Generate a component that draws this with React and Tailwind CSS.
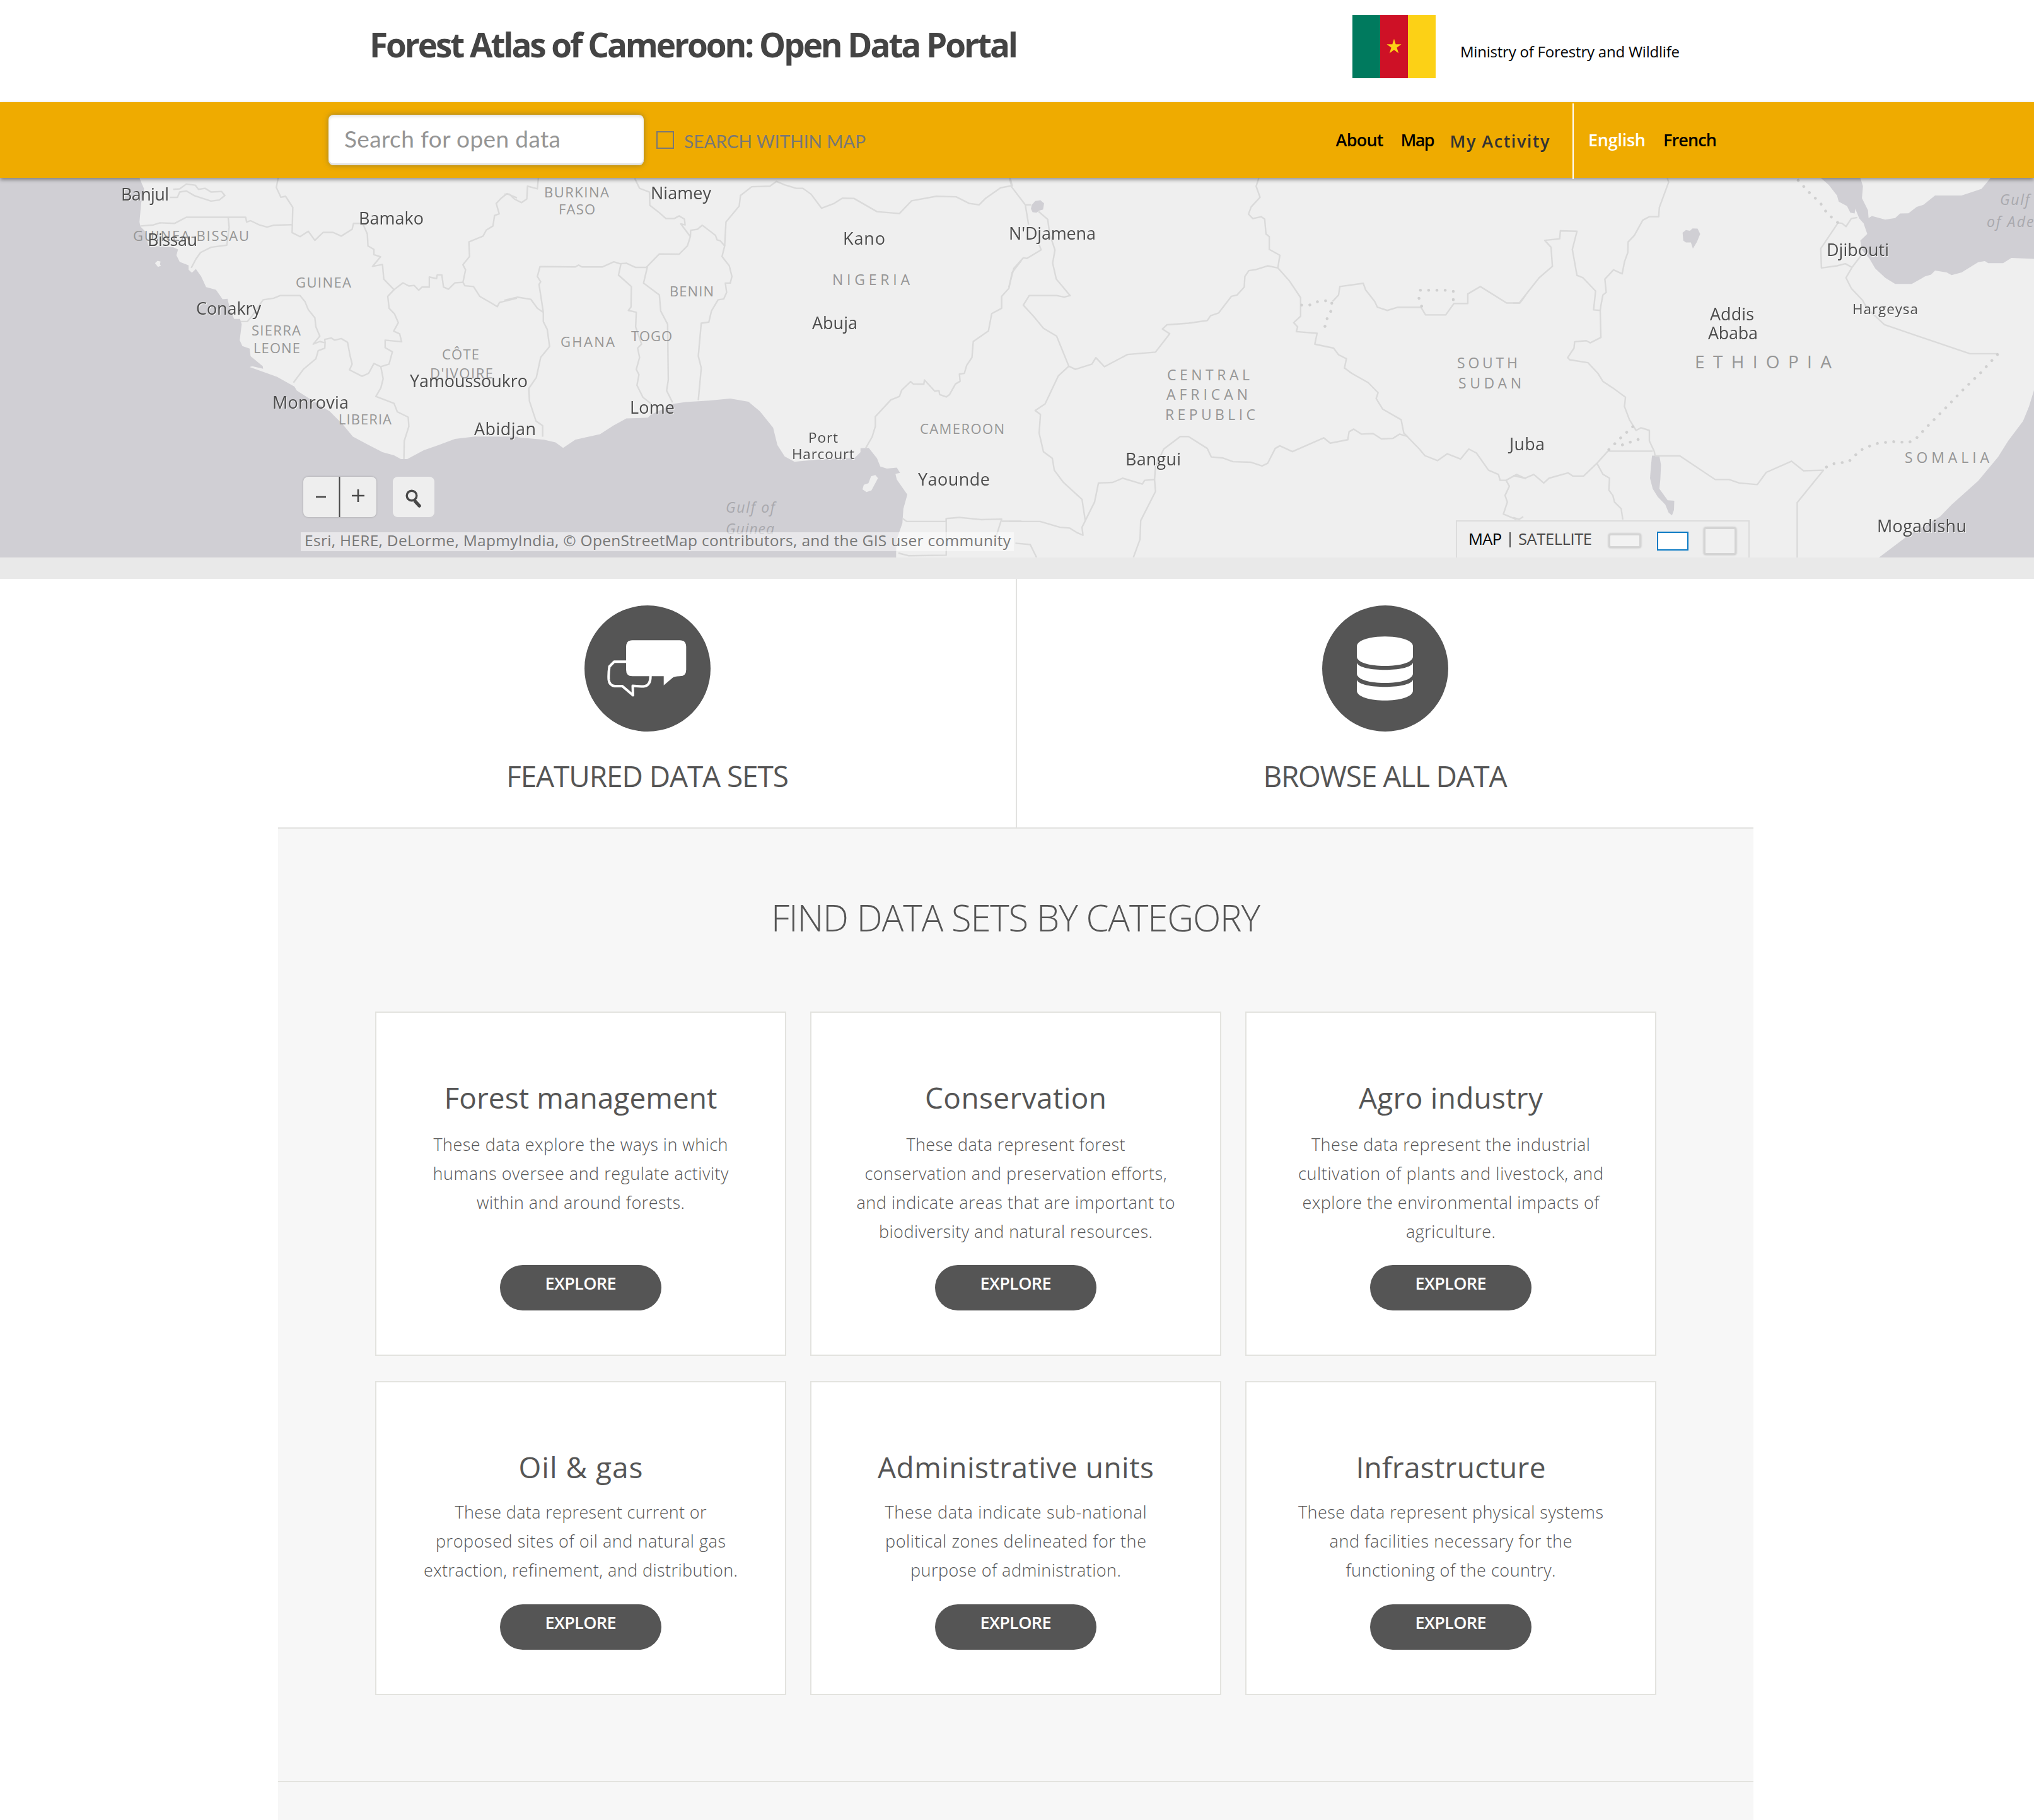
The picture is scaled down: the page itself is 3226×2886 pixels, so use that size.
import React, { useLayoutEffect, useRef, useState } from "react";

const FONT = "font-['Open_Sans','Noto_Sans',sans-serif]";

/* One line of text whose tracking is adjusted so that it fills `width` pixels. */
function Fit({ width, className = "", children }) {
  const ref = useRef(null);
  const [spacing, setSpacing] = useState(0);
  useLayoutEffect(() => {
    const natural = ref.current.getBoundingClientRect().width;
    setSpacing((width - natural) / Math.max(1, children.length - 1));
  }, [width, children]);
  return (
    <span
      ref={ref}
      className={"inline-block whitespace-nowrap " + className}
      style={{ letterSpacing: spacing + "px", marginRight: -spacing + "px" }}
    >
      {children}
    </span>
  );
}

function Flag() {
  return (
    <svg className="mt-6 h-[100px] w-[132px] shrink-0" viewBox="0 0 132 100">
      <rect width="44" height="100" fill="#007a5e" />
      <rect x="44" width="44" height="100" fill="#ce1126" />
      <rect x="88" width="44" height="100" fill="#fcd116" />
      <path
        d="M66 37.5l2.7 8.7h8.9l-7.2 5.4 2.8 8.8-7.2-5.4-7.2 5.4 2.8-8.8-7.2-5.4h8.9z"
        fill="#fcd116"
      />
    </svg>
  );
}

function Header() {
  return (
    <header className="flex h-[162px] items-start bg-white pl-[586px]">
      <h1 className="mt-[41px] w-[1559px] text-[53px] leading-[60px] font-bold text-[#444]">
        <Fit width={1029}>Forest Atlas of Cameroon: Open Data Portal</Fit>
      </h1>
      <Flag />
      <p className="ml-[39px] text-[24px] leading-[163px] text-black">
        <Fit width={348}>Ministry of Forestry and Wildlife</Fit>
      </p>
    </header>
  );
}

function NavBar() {
  return (
    <nav className="relative z-10 flex h-[120px] items-center bg-[#efab00] pr-[503px] pl-[521px] text-[27px] font-semibold text-black shadow-[0_3px_6px_rgba(0,0,0,0.4)]">
      <div className="flex h-20 w-[500px] items-center rounded-lg bg-white pb-1 pl-[25px] font-['Lato',sans-serif] text-[37px] font-normal text-[#959595] shadow-[0_0_8px_rgba(120,110,60,0.7),inset_0_3px_4px_rgba(0,0,0,0.1),inset_0_-3px_0_#e2e2e2]">
        <Fit width={343}>Search for open data</Fit>
      </div>
      <span className="ml-5 size-7 border-2 border-[#777]" />
      <span className="ml-4 pt-1 font-['Lato',sans-serif] text-[28px] font-normal text-[#777]">
        <Fit width={288}>SEARCH WITHIN MAP</Fit>
      </span>
      <div className="ml-auto flex items-center">
        <Fit width={76}>About</Fit>
      </div>
      <div className="ml-[27px] flex items-center">
        <Fit width={54}>Map</Fit>
      </div>
      <div className="ml-6 flex items-center pt-1 text-[#333]">
        <Fit width={158}>My Activity</Fit>
      </div>
      <span className="mt-1 ml-9 h-[120px] w-[2.5px] bg-white" />
      <div className="ml-[23px] flex items-center text-white">
        <Fit width={91}>English</Fit>
      </div>
      <div className="ml-7 flex items-center">
        <Fit width={85}>French</Fit>
      </div>
    </nav>
  );
}

/* Place names: [text, left, baseline, width] */
const CITIES = [
  ["Banjul", 192, 318, 76],
  ["Bissau", 234, 390, 79],
  ["Bamako", 569, 356, 103],
  ["Conakry", 311, 499, 103],
  ["Yamoussoukro", 650, 614, 187],
  ["Monrovia", 432, 648, 121],
  ["Abidjan", 752, 690, 98],
  ["Niamey", 1032, 316, 96],
  ["Lome", 999, 656, 71],
  ["Kano", 1337, 388, 67],
  ["Abuja", 1288, 522, 72],
  ["Yaounde", 1456, 770, 114],
  ["N'Djamena", 1600, 380, 138],
  ["Bangui", 1785, 738, 88],
  ["Juba", 2394, 714, 56],
  ["Addis", 2712, 508, 70],
  ["Ababa", 2709, 538, 79],
  ["Djibouti", 2897, 406, 99],
  ["Mogadishu", 2977, 844, 142],
];
const TOWNS = [
  ["Port", 1282, 702, 47],
  ["Harcourt", 1256, 728, 99],
  ["Hargeysa", 2938, 498, 104],
];
const COUNTRIES = [
  ["GUINEA-BISSAU", 211, 382, 184],
  ["GUINEA", 469, 456, 88],
  ["SIERRA", 399, 532, 78],
  ["LEONE", 402, 560, 74],
  ["CÔTE", 701, 570, 59],
  ["D'IVOIRE", 682, 600, 100],
  ["LIBERIA", 537, 673, 84],
  ["BURKINA", 863, 313, 103],
  ["FASO", 886, 340, 58],
  ["BENIN", 1062, 470, 70],
  ["GHANA", 889, 550, 86],
  ["TOGO", 1001, 541, 65],
  ["CAMEROON", 1459, 688, 134],
];
const WIDE_COUNTRIES = [
  ["NIGERIA", 1320, 452, 123],
  ["CENTRAL", 1851, 603, 131],
  ["AFRICAN", 1850, 634, 129],
  ["REPUBLIC", 1848, 666, 143],
  ["SOUTH", 2311, 584, 96],
  ["SUDAN", 2313, 616, 100],
  ["SOMALIA", 3021, 734, 134],
];
const SEAS = [
  ["Gulf of", 1151, 813, 78],
  ["Guinea", 1151, 847, 77],
  ["Gulf", 3172, 325, 47],
  ["of Aden", 3151, 360, 90],
];

function Labels({ items, ...rest }) {
  return (
    <g {...rest}>
      {items.map(([text, x, y, width]) => (
        <text key={text} x={x} y={y} textLength={width} lengthAdjust="spacing">
          {text}
        </text>
      ))}
    </g>
  );
}

/* The base map is drawn as four tiles, each in its own tile units. */
const TILES = [
  {
    transform: "translate(0 270) scale(0.52296 0.42092)",
    water: [
      "M0 0H425L424 32 437 70 428 125 423 195 426 212 440 230 450 284 525 290 540 298 535 320 545 345 572 358 572 375 582 386 594 372 610 400 625 440 655 450 675 486 690 484 697 520 710 560 728 560 733 580 727 640 735 662 757 672 760 700 797 738 798 748 765 738 757 741 800 760 840 778 893 815 900 830 940 862 1000 908 1040 958 1070 1003 1110 1030 1160 1062 1195 1074 1216 1088 1235 1088 1285 1055 1330 1035 1380 1012 1440 1003 1570 1004V1600H0Z",
    ],
    land: ["M470 350l8-9 9 3-2 10 3 6-9 4z"],
    borders: [
      "M848 0L838 65 852 102 866 98 888 140 886 235 910 250 935 230 955 264 980 234 1010 234 1035 248 1068 222 1072 200 1100 200 1114 240 1116 285 1134 298 1134 318 1154 326 1130 362 1160 355 1164 410 1195 450 1176 475 1180 520 1196 540 1208 574 1194 606 1212 616 1218 646 1168 640 1168 668 1190 684 1180 730 1155 740 1162 785 1155 820 1140 852 1195 878 1205 910 1238 930 1240 965 1226 1020 1225 1088",
      "M515 102L538 102 545 82 565 78 590 96 640 116 665 112 682 95 672 80 640 82 622 68 602 72 592 56 565 52 545 70 525 72",
      "M426 210L465 206 485 198 530 200 565 177H745L748 195 760 190 785 205 810 214 830 207 888 205",
      "M692 177L695 215 688 282 640 290 608 310 594 335 580 368",
      "M730 570L750 570 765 548 798 488 830 482 850 472 910 472 925 495 935 525 955 556 958 590 970 625 950 655 970 645 986 650 985 670 965 680 958 710 920 750 890 800",
      "M986 650L985 637 1005 632 1015 640 1035 634 1054 648 1062 700 1068 730 1060 752 1098 776 1118 765 1134 728 1155 740",
      "M1195 450L1222 424 1240 436 1256 434 1270 452 1280 440 1302 440 1302 402 1324 408 1326 394 1340 394 1345 440 1360 448 1380 424 1404 422 1410 435 1436 438 1455 475 1490 500 1508 514 1515 498 1568 482",
      "M1404 422L1412 375 1404 356 1424 325 1422 270 1465 248 1475 225 1495 210 1500 170 1514 164 1505 125 1520 105 1538 88 1568 104",
    ],
  },
  {
    transform: "translate(800 270) scale(0.52296 0.42092)",
    water: [
      "M-4 1004L40 1006 120 1015 155 1025 178 1046 215 1015 240 1008 290 994 330 962 370 935 435 932 445 920 480 900 510 880 550 873 620 868 685 860 740 872 775 908 815 970 828 1035 850 1078 880 1098 950 1090 1062 1084 1080 1062 1080 1047 1105 1046 1130 1085 1140 1116 1160 1124 1190 1120 1200 1140 1186 1144 1190 1165 1222 1222 1210 1275 1207 1330 1190 1390 1188 1440 1188 1460H-4Z",
    ],
    land: ["M1112 1153l13-5 8 12-20 46-15 6-12-10 4-17 14-6z"],
    borders: [
      "M0 90L15 90 30 108 52 122 68 108 70 60 100 70 103 30",
      "M0 490L40 478 80 486 100 520 118 535 118 570 130 600 137 664 110 705 97 780 74 822 76 870 96 945 116 962 116 1004",
      "M118 535L105 430 110 420 100 400 108 363 215 364 225 357 235 364H298L332 345 350 352 370 350 398 366H430L470 315 530 316 555 285 564 250 535 202 548 206 546 184 530 172 515 182H490L470 160 441 132 440 82 410 68 395 30",
      "M354 350L346 395 358 408 385 438 384 515 376 528 400 535 398 590 416 655 404 670 410 705 400 750 408 770 402 810 420 855 445 880",
      "M434 362L422 425 470 470 474 530 495 580 497 790 492 830 510 875",
      "M564 250L565 226 586 222 600 207 640 245 645 262 655 266 668 285 660 325 682 360 690 400 685 425 670 425 674 460 665 485 648 488 628 530 620 572 597 576 588 700 597 745 588 866",
      "M668 285L672 195 712 135 716 95 750 62 805 60 825 42 850 55 885 68 905 68 930 90 962 143 1000 125 1025 105 1060 106 1130 156 1198 163 1235 115 1310 98 1370 100 1410 125 1440 130 1460 105 1505 66 1540 58 1534 30",
      "M1568 340L1540 385 1530 445 1508 475 1508 520 1478 540 1468 605 1422 645 1418 705 1402 735 1395 765 1380 768 1382 795 1368 805 1350 845 1340 854 1320 845 1318 830 1305 832 1274 790 1272 806 1240 805 1232 796 1205 828 1198 852 1172 865 1125 928 1125 965 1115 1005 1096 1046",
      "M1208 1312L1220 1323H1340V1312L1380 1308 1445 1316 1508 1314 1490 1385",
      "M1508 1322H1568M1340 1312V1450L1225 1452 1195 1442",
    ],
  },
  {
    transform: "translate(1600 270) scale(0.52296 0.42092)",
    water: ["M70 130L80 116 96 113 107 125 104 148 92 152 84 160 72 158 67 145Z"],
    land: [],
    borders: [
      "M2 30L10 65 50 130 68 130M50 130L60 205M90 155L118 185 124 240 140 300 133 350 144 410 186 472 168 478 145 472 62 472 44 508 75 550 105 595 145 625 182 738 202 750 252 730 264 706 290 740 360 694 445 685 488 616 466 598 480 582 545 576 602 566 612 548 636 538 675 475 692 470 714 440 716 400 728 378 750 374 785 360 816 368 822 320 790 298 790 250 780 240 776 184 766 175 740 182 727 165 735 138 762 102 750 60 758 30",
      "M92 280L98 300 55 332 44 330 15 370 0 440",
      "M182 738L150 775 110 880 80 905 96 920 92 990 105 1060 132 1085 138 1130 165 1175 222 1240 232 1320 222 1345 225 1375 208 1366 185 1348 155 1345 95 1323H0",
      "M232 1320L260 1250 272 1178 315 1176 345 1160 405 1182 412 1168 442 1165 445 1210 400 1320 398 1390 378 1458",
      "M442 1165L445 1115 470 1050 520 1003 545 1003 602 1048 614 1080 650 1084 680 1098 735 1100 768 1114 785 1104 808 1048 822 1038 860 1060 955 1008 975 1028 1028 1015 1032 985 1046 975 1070 994 1105 992 1130 1012 1165 1010 1185 994 1210 1003",
      "M816 368L850 415 885 480 885 550 864 574 876 590 872 608 935 614 928 655 985 670 1000 695 1024 710 1018 745 1040 765 1090 800 1120 838 1114 860 1134 900 1190 940 1198 990 1245 1050 1262 1075 1300 1094 1330 1068 1370 1088 1395 1050 1418 1065 1455 1130 1485 1146 1490 1168 1508 1168 1518 1190 1505 1225 1512 1250 1500 1295 1540 1316M1508 1168L1540 1146 1568 1162",
      "M982 494L1000 470 1004 438 1075 426 1082 450 1110 495 1118 516 1148 528 1180 516H1250L1264 545H1325L1350 502H1392L1392 466 1430 438 1510 500 1550 500 1568 470",
      "M20 1405L65 1410 84 1458",
    ],
    dots: "M888 508L912 508 932 496 956 491 980 494 978 528 966 552 963 582 946 606M1252 512L1244 482 1248 452H1325L1348 456V490",
  },
  {
    transform: "translate(2400 270) scale(0.52679 0.42092)",
    water: [
      "M918 20L950 55 975 95 980 118 1005 135 1015 160 1028 163 1030 145 1042 182 1055 200 1066 240 1045 265 1050 300 1072 332 1090 370 1120 405 1150 428 1200 428 1240 400 1258 393 1270 378 1305 385 1320 395 1350 385 1400 346 1420 342 1430 350 1475 350 1500 330 1568 334V20H1443L1410 70 1350 95 1270 95 1235 130 1215 138 1190 162 1165 163 1150 180 1120 186 1080 172 1070 180 1068 150 1050 105 1053 60 1043 20Z",
      "M1570 820L1553 890 1535 945 1490 1020 1460 1080 1400 1170 1320 1260 1285 1305 1190 1375 1100 1460H1570Z",
      "M418 1075H440L445 1110 443 1165 440 1200 465 1243 485 1245 484 1280 478 1300 468 1290 458 1260 435 1230 420 1200 412 1160 415 1110Z",
      "M510 235L520 225 532 228 540 219 555 220 563 240 553 270 541 295 535 272 520 272 512 265Z",
    ],
    land: [],
    borders: [
      "M0 500H18L78 405 118 362 114 290 95 264 140 258 142 228 192 230 178 298 192 396 210 405 248 455 242 526 262 528 264 510 270 470 280 460 276 410 302 375 328 390 335 345 345 310 346 270 365 245 390 188 410 175 438 175 440 140 468 45 464 30",
      "M262 528L264 630 232 650 220 642 185 646 183 670 164 706 170 714 225 725 255 765 270 795 300 820 338 855 335 890 350 940 370 980 385 970 410 980 410 1020 425 1060 427 1076",
      "M427 1076H502L608 1165H650L680 1178 735 1184 762 1138 838 1096 874 1132 934 1130 855 1252V1460",
      "M0 1150L35 1160 62 1146 92 1178 108 1160 165 1140 180 1152 212 1152 252 1104 285 1058H420M252 1104L270 1145 290 1160 288 1205 300 1225 305 1250 325 1275 330 1316",
      "M978 198L926 295 928 368 975 360 1000 352 1020 366 1048 320M1020 366L1002 405 1018 445 1052 490 1065 520 1118 582 1375 691H1458M978 198L990 200 1002 212 1018 182 1036 178",
      "M0 1308L18 1315 30 1305",
    ],
    dots: "M858 38L890 82 925 124 945 162 978 198M1458 694L1408 762 1352 830 1300 898 1246 966 1212 1012 1190 1026 1140 1022 1090 1030 1045 1055 1010 1098 962 1106 934 1124M360 966L322 1010 286 1055M376 1014L334 1032 308 1044M376 1014L386 1040",
  },
];

function BaseMap() {
  return (
    <svg className="block h-[602px] w-full" viewBox="0 282 3226 602" preserveAspectRatio="none">
      <rect y="282" width="3226" height="602" fill="#efefef" />
      {TILES.map((tile) => (
        <g key={tile.transform} transform={tile.transform} fill="none" strokeLinejoin="round">
          {tile.water.map((d) => (
            <path key={d} d={d} fill="#d0cfd4" />
          ))}
          {tile.land.map((d) => (
            <path key={d} d={d} fill="#efefef" />
          ))}
          {tile.borders.map((d) => (
            <path key={d} d={d} stroke="#dadada" strokeWidth="2.4" vectorEffect="non-scaling-stroke" />
          ))}
          {tile.dots && (
            <path
              d={tile.dots}
              stroke="#d0d0d0"
              strokeWidth="4.5"
              strokeLinecap="round"
              strokeDasharray="0.1 13"
              vectorEffect="non-scaling-stroke"
            />
          )}
        </g>
      ))}
      <g className="font-['Open_Sans','Noto_Sans',sans-serif]">
        <Labels items={SEAS} fill="#a9a9ae" fontSize="23" fontStyle="italic" />
        <Labels items={COUNTRIES} fill="#969696" fontSize="22" />
        <Labels items={WIDE_COUNTRIES} fill="#969696" fontSize="23" />
        <Labels items={[["ETHIOPIA", 2688, 584, 217]]} fill="#969696" fontSize="28" />
        <g className="drop-shadow-[1.5px_1.5px_0_#f8f8f8]">
          <Labels items={CITIES} fill="#4c4c4c" fontSize="27" />
          <Labels items={TOWNS} fill="#4c4c4c" fontSize="22.5" />
        </g>
      </g>
    </svg>
  );
}

function MapPanel() {
  return (
    <section className="relative h-[636px] overflow-hidden border-b-[34px] border-[#e9e9e9]">
      <BaseMap />
      <div className="absolute top-[474px] left-[481px] flex h-16 gap-[26px]">
        <div className="relative flex w-[116px] rounded-lg bg-[#eee] shadow-[0_0_3px_rgba(0,0,0,0.25)]">
          <svg className="h-16 w-[116px]" viewBox="0 0 116 64" stroke="#484848" strokeWidth="2.6">
            <path d="M20 32h16M77 30h20M87 20v20" />
            <path d="M57.5 -2V66" strokeWidth="2" overflow="visible" />
          </svg>
        </div>
        <div className="flex w-[66px] items-center justify-center rounded-lg bg-[#eee]">
          <svg className="h-16 w-[66px]" viewBox="0 0 66 64" fill="none" stroke="#484848">
            <circle cx="30" cy="30" r="7.8" strokeWidth="3.4" />
            <path d="M34.5 37L36 40" strokeWidth="3" />
            <path d="M36 39.5L42 46" strokeWidth="5.5" strokeLinecap="round" />
          </svg>
        </div>
      </div>
      <div className="absolute top-[562px] left-[477px] h-[30px] w-[1131px] bg-white/50 pl-[6px] text-[24.5px] leading-[26px] text-[#777]">
        <Fit width={1120}>
          Esri, HERE, DeLorme, MapmyIndia, © OpenStreetMap contributors, and the GIS user community
        </Fit>
      </div>
      <div className="absolute top-[543px] left-[2309px] flex h-[59px] w-[466px] items-center border-2 border-b-0 border-[#dcdcdc] bg-[#eee] pl-[18px] text-[25.5px] text-[#484848]">
        <div className="mb-0.5 flex text-black">
          <Fit width={53}>MAP</Fit>
        </div>
        <span className="ml-3 h-6 w-0.5 bg-[#555]" />
        <span className="mb-0.5 ml-3 flex">
          <Fit width={117}>SATELLITE</Fit>
        </span>
        <span className="mt-1 ml-[26px] h-[23px] w-[52px] rounded-[4px] border-3 border-[#d4d4d4] bg-[#f2f2f2] shadow-[0_0_3px_rgba(0,0,0,0.2)]" />
        <span className="mt-1 ml-[25px] h-[30px] w-[50px] border-[2.5px] border-[#0a7ac4] bg-white" />
        <span className="mt-1 ml-[24px] h-[44px] w-[52px] rounded-[4px] border-3 border-[#d4d4d4] bg-[#f0f0f0] shadow-[0_0_3px_rgba(0,0,0,0.2)]" />
      </div>
    </section>
  );
}

function ChatIcon() {
  return (
    <svg className="size-[200px]" viewBox="0 0 200 200">
      <circle cx="100" cy="100" r="100" fill="#555" />
      <path
        d="M67 89.300H47L39.500 97C38.500 104 38 112 38.500 118Q39.500 127 48 128H60L77 142.500L76.500 127.500C84 128 90 129.500 96 128Q105 126 104.700 111"
        fill="none"
        stroke="#fff"
        strokeWidth="4"
        strokeLinejoin="round"
      />
      <path
        d="M76 55.300H151Q161.300 55.300 161.300 65.500V102Q161.300 112.300 151 112.300Q142.500 112.300 139.500 115L125.700 126.700V112.300H76Q66 112.300 66 102V65.500Q66 55.300 76 55.300Z"
        fill="#fff"
      />
    </svg>
  );
}

function DatabaseIcon() {
  return (
    <svg className="size-[200px]" viewBox="0 0 200 200">
      <circle cx="100" cy="100" r="100" fill="#555" />
      <g fill="#fff">
        <path d="M55 65C55 44 144 44 144 65V81C144 101 55 101 55 81Z" />
        <path d="M55 91C60 106 139 106 144 91V108C144 128 55 128 55 108Z" />
        <path d="M55 118C60 133 139 133 144 118V135C144 156 55 156 55 135Z" />
      </g>
    </svg>
  );
}

function Shortcut({ icon, label, width, className }) {
  return (
    <div className={"flex flex-col items-center pt-[42px] " + className}>
      {icon}
      <h2 className="mt-10 text-[46px] leading-[60px] text-[#555]">
        <Fit width={width}>{label}</Fit>
      </h2>
    </div>
  );
}

/* Each text line carries its set width. */
const CATEGORIES = [
  {
    title: ["Forest management", 433],
    lines: [
      ["These data explore the ways in which", 467],
      ["humans oversee and regulate activity", 469],
      ["within and around forests.", 330],
    ],
  },
  {
    title: ["Conservation", 288],
    lines: [
      ["These data represent forest", 347],
      ["conservation and preservation efforts,", 479],
      ["and indicate areas that are important to", 505],
      ["biodiversity and natural resources.", 434],
    ],
  },
  {
    title: ["Agro industry", 292],
    lines: [
      ["These data represent the industrial", 442],
      ["cultivation of plants and livestock, and", 484],
      ["explore the environmental impacts of", 471],
      ["agriculture.", 142],
    ],
  },
  {
    title: ["Oil & gas", 197],
    lines: [
      ["These data represent current or", 399],
      ["proposed sites of oil and natural gas", 460],
      ["extraction, refinement, and distribution.", 498],
    ],
  },
  {
    title: ["Administrative units", 438],
    lines: [
      ["These data indicate sub-national", 415],
      ["political zones delineated for the", 414],
      ["purpose of administration.", 334],
    ],
  },
  {
    title: ["Infrastructure", 301],
    lines: [
      ["These data represent physical systems", 484],
      ["and facilities necessary for the", 385],
      ["functioning of the country.", 333],
    ],
  },
];

function Card({ title, lines, bodyGap }) {
  return (
    <article className="flex flex-col items-center border-2 border-[#e3e3df] bg-white pt-[104px] pb-[70px] text-[#555]">
      <h3 className="text-[46px] leading-[60px]">
        <Fit width={title[1]}>{title[0]}</Fit>
      </h3>
      <p className={"flex flex-col items-center text-[27px] leading-[46px] font-light " + bodyGap}>
        {lines.map(([text, width]) => (
          <Fit key={text} width={width}>
            {text}
          </Fit>
        ))}
      </p>
      <a className="mt-auto flex h-[72px] w-64 justify-center rounded-full bg-[#555] text-[27px] leading-[58px] font-semibold text-white">
        <Fit width={113}>EXPLORE</Fit>
      </a>
    </article>
  );
}

export default function App() {
  return (
    <div className={"h-[2886px] w-[3226px] overflow-hidden bg-white " + FONT}>
      <Header />
      <NavBar />
      <MapPanel />
      <main className="ml-[441px] w-[2340px]">
        <section className="grid h-[396px] grid-cols-[1172px_1168px] border-b-2 border-[#e2e2e0]">
          <Shortcut icon={<ChatIcon />} label="FEATURED DATA SETS" width={448} className="border-r-2 border-[#e2e2e0] pl-0.5" />
          <Shortcut icon={<DatabaseIcon />} label="BROWSE ALL DATA" width={387} className="" />
        </section>
        <section className="flex h-[1572px] flex-col items-center bg-[#f7f7f7]">
          <h2 className="mt-[101px] text-[58px] leading-[80px] font-light text-[#555]">
            <Fit width={776}>FIND DATA SETS BY CATEGORY</Fit>
          </h2>
          <div className="mt-[109px] grid w-[2032px] grid-cols-3 grid-rows-[546px_498px] gap-x-[38px] gap-y-10">
            {CATEGORIES.map((category, index) => (
              <Card key={category.title[0]} {...category} bodyGap={index < 3 ? "mt-[22px]" : "mt-[19px]"} />
            ))}
          </div>
          <hr className="mt-[136px] w-full border-t-2 border-[#e3e3df]" />
        </section>
      </main>
    </div>
  );
}
